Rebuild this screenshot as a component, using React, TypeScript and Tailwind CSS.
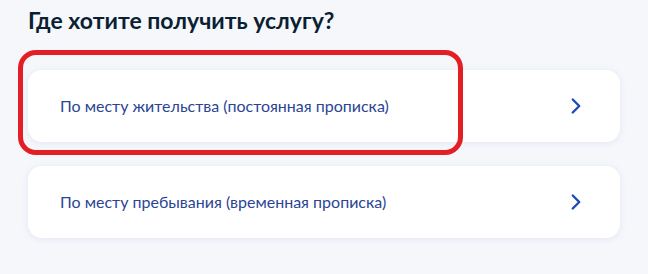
import { ChevronRight } from 'lucide-react'

const options = [
  'По месту жительства (постоянная прописка)',
  'По месту пребывания (временная прописка)',
]

export default function App() {
  return (
    <div className="w-[648px] h-[274px] bg-[#f5f7fb] font-['Lato','Noto_Sans',sans-serif] overflow-hidden">
      <div className="relative px-7 pt-[5px]">
        <h1 className="text-[23px] leading-[30px] font-bold text-[#0b1f33]">Где хотите получить услугу?</h1>

        <div className="mt-[35px] flex flex-col gap-6">
          {options.map((label) => (
            <button
              key={label}
              className="flex h-[72px] items-center justify-between rounded-[14px] bg-white pl-8 pr-[31px] text-left shadow-[0_1px_6px_rgba(170,185,210,0.25)]"
            >
              <span className="text-[16px] text-[#2a4596]">{label}</span>
              <ChevronRight size={26} strokeWidth={2.2} className="text-[#1d4bb5]" />
            </button>
          ))}
        </div>

        {/* red highlight annotation */}
        <div className="pointer-events-none absolute left-[18px] top-[50px] h-[105px] w-[445px] rounded-[18px] border-[5px] border-[#e31e24]" />
      </div>
    </div>
  )
}
